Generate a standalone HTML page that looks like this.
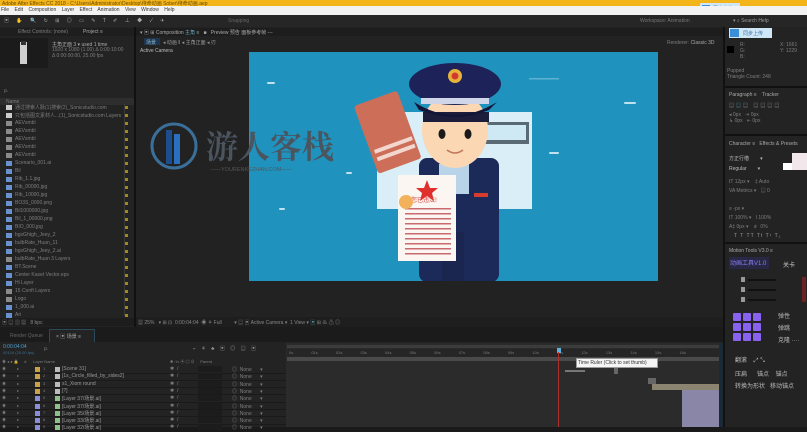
<!DOCTYPE html>
<html><head><meta charset="utf-8"><style>
*{margin:0;padding:0;box-sizing:border-box}
body{width:807px;height:427px;overflow:hidden;background:#1a1a1a;font-family:"Liberation Sans","Noto Sans CJK SC",sans-serif;font-size:5px;color:#8a8a8a;position:relative}
.a{position:absolute}
.t{position:absolute;white-space:nowrap;font-size:5px;color:#7e7e7e}
</style></head><body>
<div class="a" style="left:0;top:0;width:807px;height:6px;background:#f3b51a"></div>
<div class="t" style="left:2px;top:0;color:#6a4a00;font-size:5px">Adobe After Effects CC 2018 - C:\Users\Administrator\Desktop\待命动画 Sober\待命动画.aep</div>
<div class="a" style="left:700px;top:3px;width:40px;height:12px;background:#cfe6f7;border-radius:1px"></div>
<div class="a" style="left:702px;top:5px;width:8px;height:7px;background:#3a8fd8"></div>
<div class="t" style="left:713px;top:5px;color:#3a70a8">同步上传</div>
<div class="a" style="left:0;top:6px;width:807px;height:9px;background:#f2f2f2"></div>
<div class="t" style="left:1px;top:7px;color:#333;word-spacing:4px">File Edit Composition Layer Effect Animation View Window Help</div>
<div class="a" style="left:0;top:15px;width:807px;height:12px;background:#262626"></div>
<div class="t" style="left:4px;top:17px;color:#aaa;letter-spacing:3px">▣ ✋ 🔍 ↻ ⊞ ◎ ▭ ✎ T ✐ ⊥ ◆ ✓ ✈</div>
<div class="t" style="left:228px;top:18px;color:#666">Snapping</div>
<div class="t" style="left:640px;top:18px;color:#777">Workspace: Animation</div>
<div class="t" style="left:733px;top:18px;color:#999">▾ ⌕ Search Help</div>
<div class="a" style="left:0;top:27px;width:134px;height:300px;background:#232323"></div>
<div class="a" style="left:0;top:28px;width:134px;height:8px;background:#1e1e1e"></div>
<div class="t" style="left:18px;top:29px">Effect Controls: (none)</div>
<div class="t" style="left:83px;top:29px;color:#aaa">Project ≡</div>
<div class="a" style="left:0;top:38px;width:48px;height:30px;background:#1b1b1b"></div>
<div class="a" style="left:20px;top:42px;width:7px;height:22px;background:#cfcfcf"></div>
<div class="a" style="left:21px;top:41px;width:5px;height:4px;background:#333"></div>
<div class="t" style="left:52px;top:41px;color:#aaa">主角正面 3 ▾ used 1 time</div>
<div class="t" style="left:52px;top:47px">1920 x 1080 (1.00)  Δ 0:00:10:00</div>
<div class="t" style="left:52px;top:53px">Δ 0:00:00:00, 25.00 fps</div>
<div class="t" style="left:4px;top:88px">ρ.</div>
<div class="a" style="left:0;top:98px;width:134px;height:7px;background:#2e2e2e"></div>
<div class="t" style="left:6px;top:99px">Name</div>
<div id="proj"></div>
<div class="a" style="left:0;top:318px;width:134px;height:8px;background:#1d1d1d"></div>
<div class="t" style="left:2px;top:319px;color:#888">▣ ▤ ▥ ▦ &nbsp; 8 bpc</div>
<div class="a" style="left:124px;top:104px;width:1px;height:212px;background:#3a3a3a"></div>
<div class="a" style="left:136px;top:27px;width:587px;height:300px;background:#222"></div>
<div class="a" style="left:136px;top:28px;width:587px;height:8px;background:#1d1d1d"></div>
<div class="t" style="left:140px;top:29px;color:#aaa">▾ ▣ ⊞ Composition <span style="color:#6ab">主角</span> ≡ &nbsp; ■ &nbsp; Preview 预告 <span>面板参考帧 ---</span></div>
<div class="a" style="left:144px;top:38px;width:16px;height:7px;background:#1f3550"></div>
<div class="t" style="left:146px;top:39px;color:#8bc">场景</div>
<div class="t" style="left:163px;top:39px;color:#999">◂ 动画 ‖ ◂ 主角正面 ◂ 刃</div>
<div class="t" style="left:667px;top:40px">Renderer: <span style="color:#aaa">Classic 3D</span></div>
<div class="t" style="left:140px;top:48px;color:#bbb">Active Camera</div>
<div class="a" style="left:249px;top:52px;width:409px;height:229px;background:#1f93be;overflow:hidden">
<svg width="409" height="229" viewBox="0 0 409 229" style="position:absolute;left:0;top:0">
 <g fill="#e8f4fa" opacity=".8"><rect x="18" y="30" width="8" height="2" rx="1"/><rect x="280" y="26" width="30" height="1.5" opacity=".4"/><rect x="300" y="100" width="10" height="2" rx="1"/><rect x="375" y="50" width="12" height="2" rx="1"/><rect x="30" y="156" width="6" height="2" rx="1"/><rect x="97" y="120" width="6" height="2" rx="1"/></g>
 <rect x="128" y="60" width="155" height="97" fill="#d9eef6"/>
 <rect x="230" y="70" width="50" height="22" fill="#5a6a74"/><rect x="234" y="73" width="43" height="15" fill="#cfe9f4"/>
 <g transform="rotate(-20 145 80)"><rect x="116" y="42" width="46" height="72" fill="#cc6e58" rx="3"/><rect x="120" y="90" width="40" height="4" fill="#f3d7cf"/><rect x="120" y="98" width="40" height="4" fill="#f3d7cf"/></g>
 <rect x="170" y="106" width="80" height="124" fill="#1c2a5a" rx="8"/>
 <rect x="190" y="112" width="30" height="30" fill="#b9d4e8"/>
 <rect x="193" y="180" width="22" height="49" fill="#1a2550"/>
 <ellipse cx="206" cy="78" rx="33" ry="38" fill="#fbd7b4"/>
 <rect x="174" y="60" width="66" height="10" fill="#1b1d3a"/>
 <ellipse cx="206" cy="32" rx="46" ry="21" fill="#1d2358"/>
 <rect x="172" y="46" width="68" height="6" fill="#cfd6ea"/>
 <path d="M165 50 Q206 76 248 50 L240 58 Q206 72 170 58Z" fill="#121638"/>
 <circle cx="206" cy="24" r="7" fill="#e6b23c"/><circle cx="206" cy="24" r="3.5" fill="#d13a2e"/>
 <ellipse cx="193" cy="82" rx="3.5" ry="5" fill="#1a1a1a"/><ellipse cx="219" cy="82" rx="3.5" ry="5" fill="#1a1a1a"/>
 <path d="M198 98 Q206 104 214 98" stroke="#c0785a" stroke-width="1.5" fill="none"/>
 <rect x="149" y="123" width="58" height="86" fill="#fbf6f2"/>
 <polygon points="178,128 181,136 189,136 183,141 185,149 178,144 171,149 173,141 167,136 175,136" fill="#e0302e"/>
 <text x="162" y="150" font-size="6" fill="#d24038" font-family="Noto Sans CJK SC">您已违法!</text>
 <g fill="#c86a6e"><rect x="156" y="156" width="46" height="1.5"/><rect x="156" y="161" width="46" height="1.5"/><rect x="156" y="166" width="46" height="1.5"/><rect x="156" y="171" width="46" height="1.5"/><rect x="156" y="176" width="46" height="1.5"/><rect x="156" y="181" width="46" height="1.5"/><rect x="156" y="186" width="46" height="1.5"/><rect x="156" y="191" width="46" height="1.5"/><rect x="156" y="196" width="46" height="1.5"/><rect x="156" y="201" width="46" height="1.5"/></g>
 <circle cx="157" cy="150" r="7" fill="#f2b25c"/>
 <rect x="225" y="141" width="14" height="4" fill="#d63b2e"/>
</svg>
</div>
<svg class="a" style="left:150px;top:122px" width="200" height="56">
 <circle cx="24" cy="24" r="22" fill="none" stroke="#3a6f9a" stroke-width="3"/>
 <rect x="16" y="8" width="6" height="34" fill="#1c4e8e"/><rect x="24" y="12" width="6" height="30" fill="#2a70c0"/>
 <text x="56" y="36" font-size="32" font-weight="bold" fill="#4b5560" font-family="Noto Serif CJK SC,serif">游人客栈</text>
 <text x="60" y="49" font-size="5.5" fill="#555" font-family="Liberation Sans">——YOURENKEZHAN.COM——</text>
</svg>
<div class="a" style="left:136px;top:317px;width:587px;height:10px;background:#1e1e1e"></div>
<div class="t" style="left:138px;top:319px;color:#888">▦ 25% &nbsp; ▾ ⊞ ⊡ &nbsp;0:00:04:04 &nbsp;◉ ⚘ Full &nbsp;&nbsp;&nbsp;&nbsp;&nbsp;&nbsp;&nbsp; ▾ ▤ ▣ Active Camera ▾ &nbsp;1 View ▾ <span style="color:#59a">▣</span> ⊞ ♨ ⚠ ◎</div>
<div class="a" style="left:134px;top:27px;width:2px;height:300px;background:#111"></div>
<div class="a" style="left:723px;top:27px;width:2px;height:400px;background:#111"></div>
<div class="a" style="left:725px;top:27px;width:82px;height:400px;background:#232323"></div>
<div class="a" style="left:729px;top:28px;width:43px;height:10px;background:#cfe6f7"></div>
<div class="a" style="left:730px;top:29px;width:9px;height:8px;background:#3a8fd8"></div>
<div class="t" style="left:743px;top:30px;color:#3a70a8">同步上传</div>
<div class="a" style="left:727px;top:46px;width:7px;height:7px;background:#000"></div>
<div class="t" style="left:740px;top:42px">R:<br>G:<br>B:</div>
<div class="t" style="left:780px;top:42px">X: 1661<br>Y: 1229</div>
<div class="t" style="left:727px;top:68px">Pupped<br>Triangle Count: 248</div>
<div class="a" style="left:725px;top:86px;width:82px;height:2px;background:#111"></div>
<div class="t" style="left:729px;top:92px;color:#aaa">Paragraph ≡ &nbsp;&nbsp; Tracker</div>
<div class="t" style="left:729px;top:102px;color:#999;letter-spacing:2px">▤<span style="color:#59a">▤</span>▤ ▤▤▤▤</div>
<div class="t" style="left:729px;top:112px">◂ 0px &nbsp; ⇥ 0px<br>↳ 0px &nbsp; ⇤ 0px</div>
<div class="a" style="left:725px;top:134px;width:82px;height:2px;background:#111"></div>
<div class="t" style="left:729px;top:141px;color:#aaa">Character ≡ &nbsp; Effects &amp; Presets</div>
<div class="t" style="left:729px;top:155px;color:#bbb">方正行楷 &nbsp;&nbsp;&nbsp;&nbsp;&nbsp;&nbsp;&nbsp;▾</div>
<div class="t" style="left:729px;top:166px;color:#bbb">Regular &nbsp;&nbsp;&nbsp;&nbsp;&nbsp;&nbsp;&nbsp;▾</div>
<div class="a" style="left:792px;top:153px;width:15px;height:17px;background:#f2e8ec"></div>
<div class="a" style="left:783px;top:163px;width:9px;height:7px;background:#fff"></div>
<div class="t" style="left:729px;top:178px;line-height:9px">tT 12px ▾ &nbsp;&nbsp; ‡ Auto<br>VA Metrics ▾ &nbsp; ▤ 0<br><br>≡ -px ▾<br>IT 100% ▾ &nbsp; I 100%<br>A‡ 0px ▾ &nbsp;&nbsp; ≢ 0%</div>
<div class="t" style="left:734px;top:233px;color:#999;letter-spacing:1px">T T TT Tt T¹ T₁</div>
<div class="a" style="left:725px;top:242px;width:82px;height:2px;background:#111"></div>
<div class="t" style="left:729px;top:248px;color:#aaa">Motion Tools V3.0 ≡</div>
<div class="a" style="left:729px;top:257px;width:40px;height:12px;background:#282846"></div>
<div class="t" style="left:730px;top:258px;color:#8a7cf2;font-size:6px">动画工具V1.0</div>
<div class="t" style="left:783px;top:260px;color:#ccc;font-size:6px">关卡</div>
<div class="a" style="left:741px;top:277px;width:4px;height:5px;background:#999"></div><div class="a" style="left:748px;top:279px;width:28px;height:2px;background:#111"></div>
<div class="a" style="left:741px;top:287px;width:4px;height:5px;background:#999"></div><div class="a" style="left:748px;top:289px;width:28px;height:2px;background:#111"></div>
<div class="a" style="left:741px;top:297px;width:4px;height:5px;background:#999"></div><div class="a" style="left:748px;top:299px;width:28px;height:2px;background:#111"></div>
<div class="a" style="left:802px;top:277px;width:4px;height:25px;background:#6b2222"></div>
<svg class="a" style="left:733px;top:313px" width="30" height="30">
<g fill="#8a62f0"><rect x="0" y="0" width="8" height="8" rx="1"/><rect x="10" y="0" width="8" height="8" rx="1"/><rect x="20" y="0" width="8" height="8" rx="1"/><rect x="0" y="10" width="8" height="8" rx="1"/><rect x="10" y="10" width="8" height="8" rx="1"/><rect x="20" y="10" width="8" height="8" rx="1"/><rect x="0" y="20" width="8" height="8" rx="1"/><rect x="10" y="20" width="8" height="8" rx="1"/><rect x="20" y="20" width="8" height="8" rx="1"/></g></svg>
<div class="t" style="left:778px;top:311px;color:#bbb;line-height:12px;font-size:6px">弹性<br>弹跳<br>克隆 ····</div>
<div class="t" style="left:735px;top:355px;color:#bbb;font-size:6px">翻滚 &nbsp;&nbsp; ⤢ ⤡</div>
<div class="t" style="left:735px;top:369px;color:#bbb;font-size:6px">压扁 &nbsp;&nbsp;&nbsp;&nbsp; 锚点 &nbsp;&nbsp; 锚点</div>
<div class="t" style="left:735px;top:381px;color:#bbb;font-size:6px">转换为形状 &nbsp; 移动锚点</div>
<div class="a" style="left:0;top:327px;width:723px;height:100px;background:#232323"></div>
<div class="a" style="left:0;top:327px;width:723px;height:15px;background:#1b1b1b"></div>
<div class="t" style="left:10px;top:333px;color:#666">Render Queue</div>
<div class="a" style="left:49px;top:329px;width:46px;height:13px;background:#232323;border:1px solid #2a4a5a;border-bottom:none"></div>
<div class="t" style="left:56px;top:333px;color:#aaa">× ▣ 场景 ≡</div>
<div class="t" style="left:3px;top:344px;color:#4a9fd0">0:00:04:04</div>
<div class="t" style="left:3px;top:350px;color:#3a6f90;font-size:4px">00104 (25.00 fps)</div>
<div class="t" style="left:44px;top:346px">ρ.</div>
<div class="t" style="left:193px;top:345px;color:#999;letter-spacing:2px">⌐ ⚘ ♣ ▣ ◎ ▤ ▣</div>
<div class="t" style="left:2px;top:359px;font-size:4px">◉ ◂ ● 🔒 &nbsp;&nbsp;&nbsp; # &nbsp;&nbsp;&nbsp;&nbsp; Layer Name</div>
<div class="t" style="left:170px;top:359px;font-size:4px">✱ ⁄ fx ▣ ◎ ⊘ &nbsp;&nbsp;&nbsp; Parent</div>
<div id="layers"></div>
<div class="a" style="left:286px;top:343px;width:435px;height:84px;background:#2b2b2b"></div>
<div class="a" style="left:287px;top:345px;width:432px;height:3px;background:#3c3c3c"></div>
<div class="a" style="left:287px;top:349px;width:432px;height:8px;background:#262626"></div>
<div class="t" style="left:289px;top:350px;font-size:4px;color:#777;word-spacing:17px">0s 01s 02s 03s 04s 05s 06s 07s 08s 09s 10s 11s 12s 13s 14s 15s 16s</div>
<div class="a" style="left:287px;top:357px;width:432px;height:4px;background:#4a4a4a"></div>
<div class="a" style="left:557px;top:348px;width:4px;height:5px;background:#5fb0e0"></div>
<div class="a" style="left:558px;top:352px;width:1px;height:75px;background:#b03030"></div>
<div class="a" style="left:576px;top:358px;width:82px;height:10px;background:#f4f4f4;border:1px solid #999"></div>
<div class="t" style="left:578px;top:360px;color:#333">Time Ruler (Click to set thumb)</div>
<div class="a" style="left:565px;top:370px;width:20px;height:2px;background:#777"></div>
<div class="a" style="left:614px;top:368px;width:4px;height:6px;background:#666"></div>
<div class="a" style="left:648px;top:378px;width:8px;height:6px;background:#666"></div>
<div class="a" style="left:652px;top:384px;width:68px;height:6px;background:#8a8470"></div>
<div class="a" style="left:682px;top:390px;width:37px;height:37px;background:#8a86a8"></div>
<div class="a" style="left:719px;top:343px;width:4px;height:84px;background:#1a2a38"></div>
<script>
var p=document.getElementById('proj'),h='';
var names=['通过搜索人脉(1)搜索(2)_Sonicstudio.com','只包括图文素材人...(1)_Sonicstudio.com Layers','AEVsmbl','AEVsmbl','AEVsmbl','AEVsmbl','AEVsmbl','Scenario_001.ai','Bil','Rib_1.1.jpg','Rib_00000.jpg','Rib_10000.jpg','BO3S_0000.png','Bil1000000.jpg','Bil_1_00000.png','BIO_000.jpg','bgxGhtgh_Jeey_2','bulbRate_Huan_11','bgxGhtgh_Jeey_2.ai','bulbRate_Huan 3 Layers','BT.Scene','Center Kaset Vector.eps','Hi Layer','15 Conft Layers','Logo','1_000.ai','Ari'];
for(var i=0;i<names.length;i++){var y=104+i*8;var c=i<2?'#ccc':(i<7||i==19||i==23||i==24?'#8a8a8a':'#6a90d0');h+='<div class="a" style="left:6px;top:'+(y+1)+'px;width:6px;height:5px;background:'+c+'"></div><div class="t" style="left:15px;top:'+y+'px">'+names[i]+'</div><div class="a" style="left:125px;top:'+(y+2)+'px;width:3px;height:3px;background:#a08820"></div>';}
p.innerHTML=h;
var L=document.getElementById('layers'),s='';
var ln=['[Scene 31]','[1s_Circle_filled_by_sides2]','s1_Xiom round','[?]','[Layer 37/场景.ai]','[Layer 37/场景.ai]','[Layer 35/场景.ai]','[Layer 33/场景.ai]','[Layer 32/场景.ai]'];
for(var j=0;j<9;j++){var y=366+j*7.3;var col=j<4?'#c8a24a':'#8c8cd8';
s+='<div class="a" style="left:0;top:'+(y+6.5)+'px;width:286px;height:1px;background:#1a1a1a"></div>';
s+='<div class="t" style="left:2px;top:'+y+'px;font-size:4px">◉ &nbsp;&nbsp;&nbsp;&nbsp;&nbsp;&nbsp;&nbsp;&nbsp; ▸</div><div class="a" style="left:35px;top:'+(y+1)+'px;width:5px;height:5px;background:'+col+'"></div><div class="t" style="left:43px;top:'+y+'px;font-size:4px">'+(j+1)+'</div><div class="a" style="left:55px;top:'+(y+1)+'px;width:5px;height:5px;background:'+(j<4?'#bbb':'#8dc08a')+'"></div><div class="t" style="left:62px;top:'+y+'px;color:#999">'+ln[j]+'</div><div class="t" style="left:170px;top:'+y+'px">✱ &nbsp;/ </div><div class="a" style="left:198px;top:'+y+'px;width:24px;height:6px;background:#1c1c1c"></div><div class="t" style="left:232px;top:'+y+'px">◎ &nbsp;None &nbsp;&nbsp;&nbsp;&nbsp; ▾</div>';}
L.innerHTML=s;
</script>
</body></html>
